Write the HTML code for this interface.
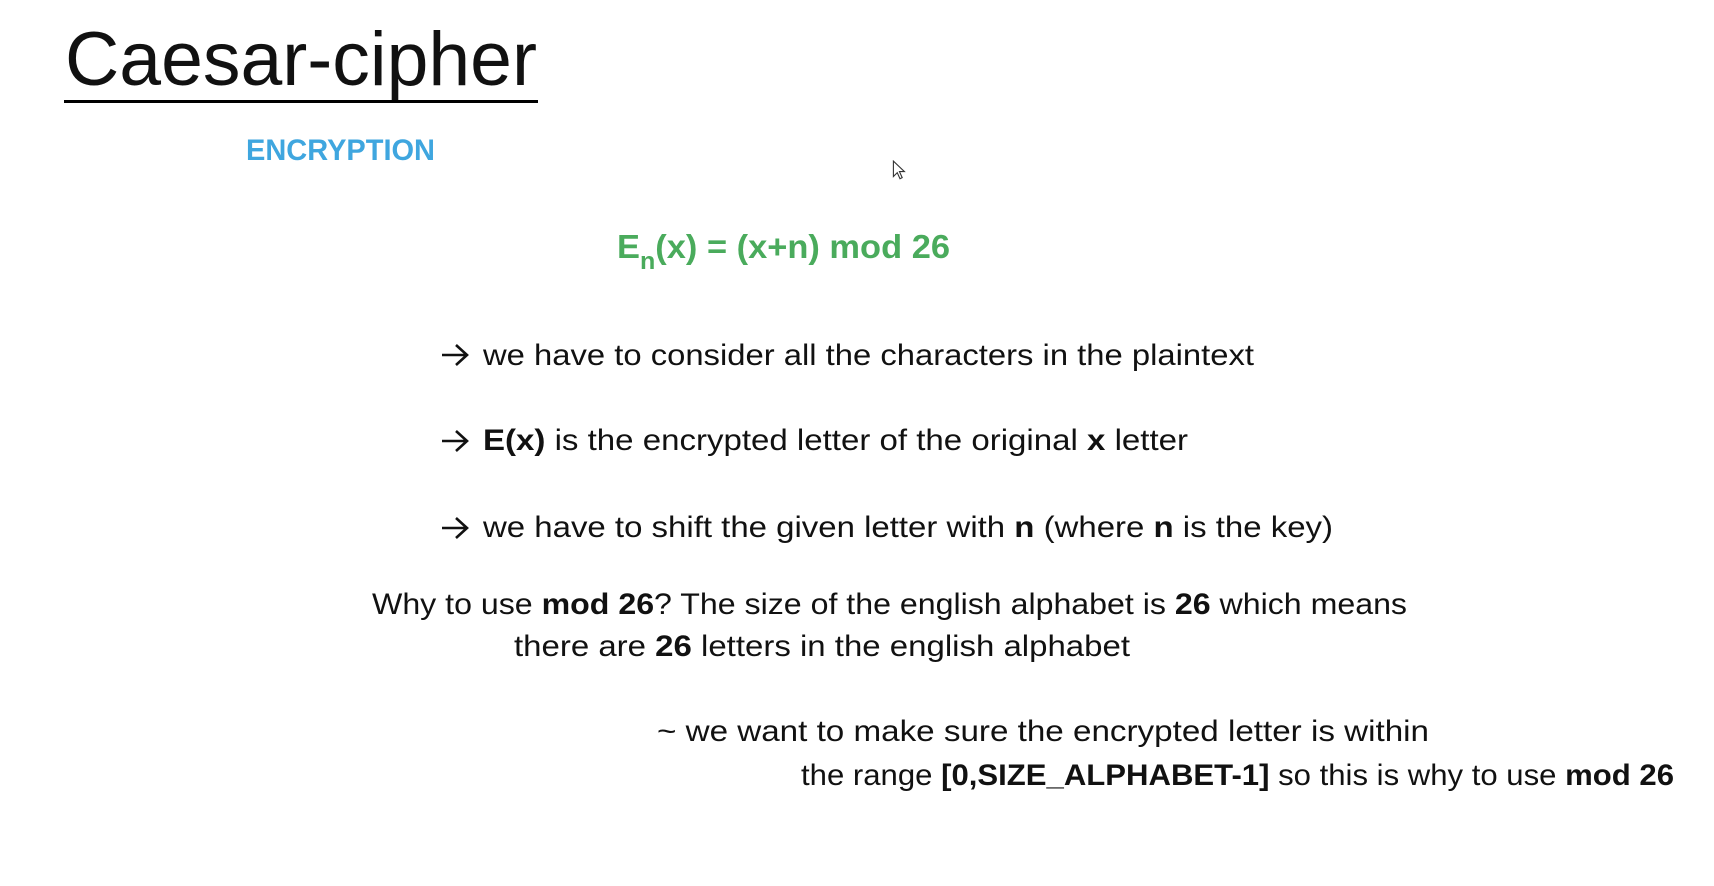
<!DOCTYPE html>
<html><head><meta charset="utf-8">
<style>
html,body{margin:0;padding:0;background:#fff;width:1714px;height:886px;overflow:hidden}
.t{position:absolute;white-space:nowrap;font-family:"Liberation Sans",sans-serif;color:#111;transform-origin:0 50%;line-height:1}
b{font-weight:bold}
.ar{position:absolute;left:440px}
</style></head><body>
<div class="t" style="left:65px;top:22px;font-size:76px;">Caesar-cipher</div>
<div style="position:absolute;left:64px;top:100px;width:474px;height:3px;background:#000"></div>
<div class="t" style="left:246px;top:136px;font-size:30px;font-weight:bold;color:#3fa6df">ENCRYPTION</div>
<div class="t" style="left:617px;top:230px;font-size:33px;font-weight:bold;color:#4aab5c">E<sub style="font-size:24px;vertical-align:-11px">n</sub>(x) = (x+n) mod 26</div>
<div class="t" style="left:483px;top:341px;font-size:30px">we have to consider all the characters in the plaintext</div>
<div class="t" style="left:483px;top:426px;font-size:30px"><b>E(x)</b> is the encrypted letter of the original <b>x</b> letter</div>
<div class="t" style="left:483px;top:513px;font-size:30px">we have to shift the given letter with <b>n</b> (where <b>n</b> is the key)</div>
<div class="t" style="left:372px;top:590px;font-size:30px">Why to use <b>mod 26</b>? The size of the english alphabet is <b>26</b> which means</div>
<div class="t" style="left:514px;top:632px;font-size:30px">there are <b>26</b> letters in the english alphabet</div>
<div class="t" style="left:657px;top:717px;font-size:30px">~ we want to make sure the encrypted letter is within</div>
<div class="t" style="left:801px;top:761px;font-size:30px">the range <b>[0,SIZE_ALPHABET-1]</b> so this is why to use <b>mod 26</b></div>
<svg class="ar" style="top:342px" width="30" height="26" viewBox="0 0 30 26"><path d="M2 13 H26 M16 3 L27 13 L16 23" fill="none" stroke="#111" stroke-width="2.6"/></svg>
<svg class="ar" style="top:428px" width="30" height="26" viewBox="0 0 30 26"><path d="M2 13 H26 M16 3 L27 13 L16 23" fill="none" stroke="#111" stroke-width="2.6"/></svg>
<svg class="ar" style="top:515px" width="30" height="26" viewBox="0 0 30 26"><path d="M2 13 H26 M16 3 L27 13 L16 23" fill="none" stroke="#111" stroke-width="2.6"/></svg>
<svg style="position:absolute;left:892px;top:160px" width="16" height="22" viewBox="0 0 14 20"><path d="M1 1 L1 15 L4.5 11.5 L7 17 L9 16 L6.5 10.5 L11 10.5 Z" fill="#fff" stroke="#333" stroke-width="1"/></svg>
<script>
var targets=[472,189,333,771,705,850,1035,616,772,873];
var els=document.querySelectorAll('.t');
els.forEach(function(e,i){var w=targets[i];if(!w)return;var r=e.getBoundingClientRect().width;if(r>0)e.style.transform='scaleX('+(w/r)+')';});
</script>
</body></html>
